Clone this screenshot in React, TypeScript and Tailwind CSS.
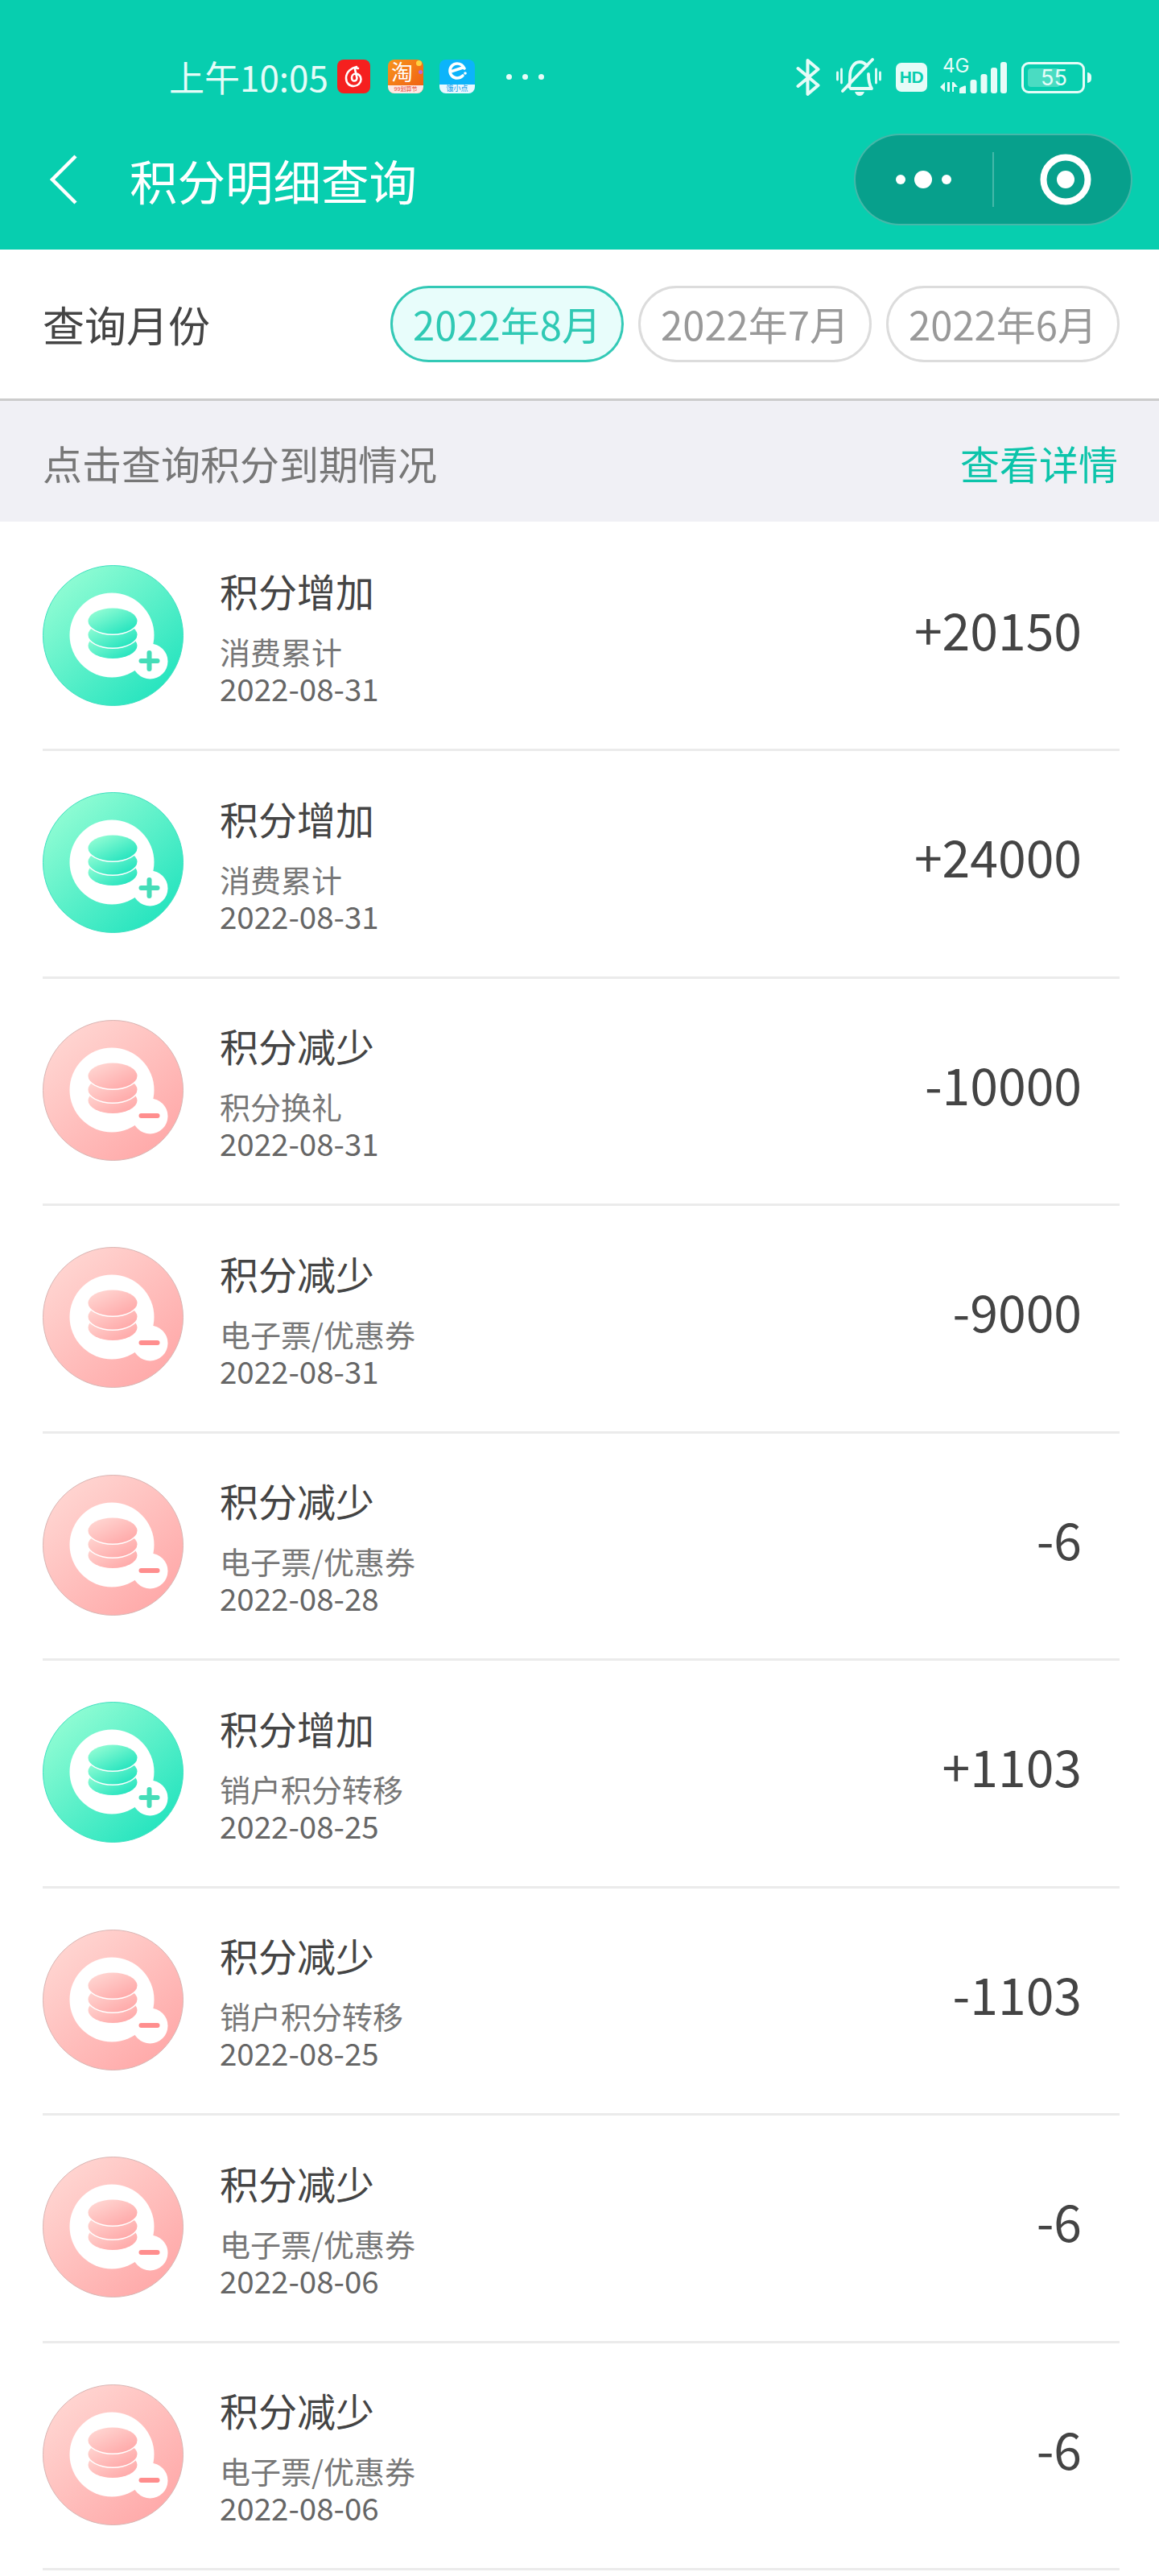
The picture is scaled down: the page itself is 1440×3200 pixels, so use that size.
const FONT = "font-['Noto_Sans_CJK_SC','Noto_Sans',sans-serif]";

type Kind = "add" | "sub";

type Row = {
  kind: Kind;
  source: string;
  date: string;
  amount: string;
};

const rows: Row[] = [
  { kind: "add", source: "消费累计", date: "2022-08-31", amount: "+20150" },
  { kind: "add", source: "消费累计", date: "2022-08-31", amount: "+24000" },
  { kind: "sub", source: "积分换礼", date: "2022-08-31", amount: "-10000" },
  { kind: "sub", source: "电子票/优惠券", date: "2022-08-31", amount: "-9000" },
  { kind: "sub", source: "电子票/优惠券", date: "2022-08-28", amount: "-6" },
  { kind: "add", source: "销户积分转移", date: "2022-08-25", amount: "+1103" },
  { kind: "sub", source: "销户积分转移", date: "2022-08-25", amount: "-1103" },
  { kind: "sub", source: "电子票/优惠券", date: "2022-08-06", amount: "-6" },
  { kind: "sub", source: "电子票/优惠券", date: "2022-08-06", amount: "-6" },
];

function Avatar({ kind }: { kind: Kind }) {
  const add = kind === "add";
  const fill = `url(#grad-${kind})`;
  const mark = add ? "#45DDB8" : "#FF8E8E";
  return (
    <svg width="175" height="175" viewBox="0 0 175 175" className="mb-[2px] shrink-0">
      <defs>
        <linearGradient id={`grad-${kind}`} x1="0.12" y1="0.08" x2="0.88" y2="0.92">
          <stop offset="0" stopColor={add ? "#93FDD4" : "#FFD6D2"} />
          <stop offset="1" stopColor={add ? "#22E3BE" : "#FFA8A8"} />
        </linearGradient>
      </defs>
      <circle cx="87.5" cy="87.5" r="87" fill={fill} stroke={add ? "#3fe0c0" : "#d9b5b3"} strokeWidth="1" />
      <circle cx="86" cy="87" r="52.5" fill="#fff" />
      <circle cx="133.5" cy="119.5" r="22" fill="#fff" />
      <ellipse cx="87" cy="100" rx="30.5" ry="16" fill={fill} />
      <ellipse cx="87" cy="86.5" rx="32" ry="17.5" fill="#fff" />
      <ellipse cx="87" cy="86.5" rx="30.5" ry="16" fill={fill} />
      <ellipse cx="87" cy="69.5" rx="32" ry="17.5" fill="#fff" />
      <ellipse cx="87" cy="69.5" rx="30.5" ry="16" fill={fill} />
      <path d="M122.500 119h20" stroke={mark} strokeWidth="6" strokeLinecap="round" />
      {add && <path d="M132.500 109v20" stroke={mark} strokeWidth="6" strokeLinecap="round" />}
    </svg>
  );
}

function MusicIcon() {
  return (
    <svg width="41" height="42" viewBox="0 0 41 42">
      <rect width="41" height="42" rx="8" fill="#F5201F" />
      <path
        d="M24 9c-6 1-13 6-13 14 0 6 4 10 9.500 10 5 0 9-4 9-8.500 0-4-3-7-6.500-7-3 0-5 2.500-5 5 0 2.500 1.500 4 3 4 2 0 3.500-1.500 3.500-3.500L22 12c0-1.500 2-2 4-1"
        fill="none"
        stroke="#fff"
        strokeWidth="2.6"
        strokeLinecap="round"
      />
    </svg>
  );
}

function TaobaoIcon() {
  return (
    <div className="relative h-[42px] w-[44px] rounded-[8px] bg-gradient-to-br from-[#F7941D] to-[#EE5A12]">
      <span className="absolute left-[4px] top-[-1px] text-[27px] leading-[32px] text-white">淘</span>
      <span className="absolute right-[2px] top-[1px] h-[7px] w-[7px] rounded-full bg-[#FFD23F]" />
      <span className="absolute right-[1px] top-[13px] h-[5px] w-[5px] rounded-full bg-[#B76BD8]" />
      <div className="absolute bottom-0 left-0 flex h-[10px] w-full items-center justify-center rounded-b-[8px] bg-[#FCE9E6]">
        <span className="font-['Liberation_Sans','Noto_Sans_CJK_SC',sans-serif] text-[7px] leading-[10px] text-[#E8452C]">99划算节</span>
      </div>
    </div>
  );
}

function EleIcon() {
  return (
    <div className="relative h-[42px] w-[44px] rounded-[8px] bg-[#0CB4FA]">
      <svg width="44" height="32" viewBox="0 0 44 32" className="absolute left-0 top-0">
        <path
          d="M31 11c-2-4-5-6-9-6-5 0-9 4-9 9s4 9 9 9c2.500 0 5-1 7-3M14 15l15-5"
          fill="none"
          stroke="#fff"
          strokeWidth="3.6"
          strokeLinecap="round"
        />
        <circle cx="32" cy="17" r="1.800" fill="#fff" />
      </svg>
      <div className="absolute bottom-0 left-0 flex h-[11px] w-full items-center justify-center rounded-b-[8px] bg-[#EAF8FF]">
        <span className="font-['Liberation_Sans','Noto_Sans_CJK_SC',sans-serif] text-[9px] leading-[11px] text-[#0C9BEA]">饿小点</span>
      </div>
    </div>
  );
}

function StatusIcons() {
  const c = "#E6FCF8";
  return (
    <div className="flex items-center">
      {/* bluetooth */}
      <svg width="30" height="48" viewBox="0 0 30 48" className="mr-[20px]">
        <path d="M2.500 13l25 21-13 11V3l13 11-25 21" fill="none" stroke={c} strokeWidth="4" strokeLinecap="round" strokeLinejoin="round" />
      </svg>
      {/* muted bell */}
      <svg width="56" height="48" viewBox="0 0 56 48" className="mr-[18px]">
        <path d="M1.500 18v9M6.500 14v17M49.500 14v17M54.500 18v9" stroke={c} strokeWidth="2.800" strokeLinecap="round" />
        <path d="M16 36c1-3 1-7 1-13 0-10 5-18 12-18 4 0 7 2 9 5M40 20c0 8 1 13 4 18H18" fill="none" stroke={c} strokeWidth="3.800" strokeLinecap="round" strokeLinejoin="round" />
        <path d="M45 2L8 41" stroke={c} strokeWidth="3.800" strokeLinecap="round" />
        <path d="M23 42h12c-1 3-3 5-6 5s-5-2-6-5z" fill={c} />
      </svg>
      {/* HD */}
      <div className="mr-[15px] flex h-[36px] w-[39px] items-center justify-center rounded-[7px] bg-[#E6FCF8]">
        <span className="font-['Liberation_Sans',sans-serif] text-[21px] font-bold leading-[36px] tracking-[-0.5px] text-[#07CEAF]">HD</span>
      </div>
      {/* 4G and signal */}
      <div className="relative mr-[18px] h-[44px] w-[84px]">
        <span className="absolute left-[4px] top-[-6px] font-['Inter',sans-serif] text-[24px] leading-[28px] text-[#E6FCF8]">4G</span>
        <svg width="84" height="44" viewBox="0 0 84 44" className="absolute left-0 top-0">
          <path d="M7 28v12L1 34zM10 28h3v12h-3zM16 28h2v12h-2zM18 28l5 6h-5z" fill={c} />
          <path d="M25 42v-6c0-1 8-5 8-3v9z" fill={c} />
          <rect x="38.500" y="25" width="8" height="17" rx="3" fill={c} />
          <rect x="51.500" y="18" width="8" height="24" rx="3" fill={c} />
          <rect x="64" y="10" width="8" height="32" rx="3" fill={c} />
          <rect x="76" y="3" width="8" height="39" rx="3" fill={c} />
        </svg>
      </div>
      {/* battery */}
      <div className="relative flex h-[39px] w-[79px] items-center rounded-[9px] border-[3px] border-[#E6FCF8]">
        <div className="ml-[5px] h-[23px] w-[40px] rounded-[4px] bg-[#4ADCC2]" />
        <span className="absolute left-[21px] top-0 font-['Inter',sans-serif] text-[27px] leading-[33px] text-[#E6FCF8]">55</span>
      </div>
      <div className="ml-[3px] h-[13px] w-[5px] rounded-r-full bg-[#E6FCF8]" />
    </div>
  );
}

function Header() {
  return (
    <header className="flex h-[310px] flex-col bg-[#07CEAF]">
      <div className="flex h-[122px] items-end justify-between pb-[2px] pl-[210px] pr-[84px]">
        <div className="flex items-center">
          <span className="w-[209px] text-[44px] leading-[50px] text-[#E6FCF8]">上午10:05</span>
          <MusicIcon />
          <div className="ml-[22px]"><TaobaoIcon /></div>
          <div className="ml-[20px]"><EleIcon /></div>
          <div className="ml-[39px] flex items-center gap-[13px]">
            <span className="h-[7px] w-[7px] rounded-full bg-[#E6FCF8]" />
            <span className="h-[7px] w-[7px] rounded-full bg-[#E6FCF8]" />
            <span className="h-[7px] w-[7px] rounded-full bg-[#E6FCF8]" />
          </div>
        </div>
        <StatusIcons />
      </div>
      <div className="mt-[44px] flex items-center justify-between pl-[61px] pr-[33px]">
        <div className="flex items-center">
          <svg width="36" height="62" viewBox="0 0 36 62">
            <path d="M33 2L4 31l29 29" fill="none" stroke="#fff" strokeWidth="4.500" />
          </svg>
          <span className="ml-[64px] text-[59.500px] leading-[70px] text-white">积分明细查询</span>
        </div>
        <div className="flex h-[114px] w-[346px] items-center rounded-full border-2 border-white/25 bg-[#07A08C]">
          <div className="ml-[50px] flex w-[120px] items-center">
            <span className="h-[12px] w-[12px] rounded-full bg-white" />
            <span className="ml-[11px] h-[22px] w-[22px] rounded-full bg-white" />
            <span className="ml-[12px] h-[12px] w-[12px] rounded-full bg-white" />
          </div>
          <div className="h-[68px] w-[2px] bg-white/25" />
          <svg width="64" height="64" viewBox="0 0 64 64" className="ml-[57px]">
            <circle cx="32" cy="32" r="27.500" fill="none" stroke="#fff" strokeWidth="8" />
            <circle cx="32" cy="32" r="11" fill="#fff" />
          </svg>
        </div>
      </div>
    </header>
  );
}

function Chip({ label, active }: { label: string; active?: boolean }) {
  return (
    <div
      className={
        active
          ? "flex h-[95px] w-[290px] items-center justify-center rounded-full border-[3px] border-[#33C9B6] bg-[#E8FDFB] text-[#2FC9B4]"
          : "flex h-[95px] w-[290px] items-center justify-center rounded-full border-[3px] border-[#DCDCDC] text-[#999999]"
      }
    >
      <span className="mb-[2px] text-[49px] leading-[60px]">{label}</span>
    </div>
  );
}

function RecordRow({ row }: { row: Row }) {
  return (
    <div className="ml-[53px] mr-[49px] flex h-[282.500px] items-center border-b-[3px] border-[#EBEBEB] pr-[47px]">
      <Avatar kind={row.kind} />
      <div className="ml-[45px] flex-1">
        <div className="text-[48px] leading-[60px] text-[#444444]">{row.kind === "add" ? "积分增加" : "积分减少"}</div>
        <div className="mt-[23px] text-[38px] leading-[46px] text-[#777777]">{row.source}</div>
        <div className="text-[38.500px] leading-[45px] text-[#666666]">{row.date}</div>
      </div>
      <div className="mb-[19px] text-[62.500px] leading-[74px] text-[#444444]">{row.amount}</div>
    </div>
  );
}

export default function App() {
  return (
    <div className={`h-[3200px] w-[1440px] overflow-hidden bg-white ${FONT}`}>
      <Header />
      <div className="flex h-[188px] items-center justify-between border-b-[3px] border-[#CCCCCC] pl-[53px] pr-[49px]">
        <span className="text-[52px] leading-[64px] text-[#444444]">查询月份</span>
        <div className="flex gap-[18px]">
          <Chip label="2022年8月" active />
          <Chip label="2022年7月" />
          <Chip label="2022年6月" />
        </div>
      </div>
      <div className="flex h-[150px] items-center justify-between bg-[#F0F0F5] pl-[53px] pr-[51px]">
        <span className="mt-[4px] text-[49px] leading-[60px] text-[#777777]">点击查询积分到期情况</span>
        <span className="mt-[4px] text-[49px] leading-[60px] text-[#0CC4AA]">查看详情</span>
      </div>
      <div className="pt-[2.500px]">
        {rows.map((row, i) => (
          <RecordRow key={i} row={row} />
        ))}
      </div>
    </div>
  );
}
